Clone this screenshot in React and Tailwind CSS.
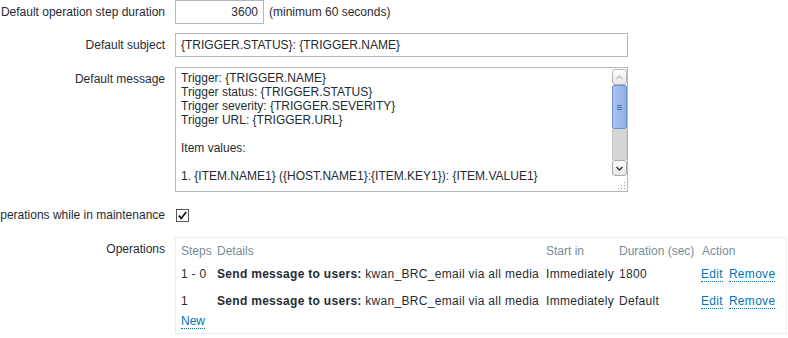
import React from 'react'

const lines = [
  'Trigger: {TRIGGER.NAME}',
  'Trigger status: {TRIGGER.STATUS}',
  'Trigger severity: {TRIGGER.SEVERITY}',
  'Trigger URL: {TRIGGER.URL}',
  '',
  'Item values:',
  '',
  '1. {ITEM.NAME1} ({HOST.NAME1}:{ITEM.KEY1}): {ITEM.VALUE1}',
]

const ops = [
  { steps: '1 - 0', dur: '1800' },
  { steps: '1', dur: 'Default' },
]

function Label({ children, top }) {
  return (
    <div className={`w-[165px] shrink-0 flex justify-end whitespace-nowrap leading-[14px] ${top || ''}`}>
      <span>{children}</span>
    </div>
  )
}

function LinkBtn({ children }) {
  return (
    <span className="inline-block leading-[14px] text-[#0275b8] border-b border-dotted border-[#0275b8]">{children}</span>
  )
}

function Scrollbar() {
  return (
    <div className="w-[15px] shrink-0 mt-[1px] flex flex-col">
      {/* up arrow */}
      <div className="h-[16px] rounded-[3px] border border-[#b4b4b4] bg-gradient-to-b from-[#fdfdfd] to-[#e6e6e6] flex items-center justify-center">
        <svg width="7" height="5" viewBox="0 0 7 5">
          <polyline points="0.5,4 3.5,1 6.5,4" fill="none" stroke="#b9b9b9" strokeWidth="1.2" />
        </svg>
      </div>
      {/* thumb */}
      <div className="h-[44px] rounded-[2px] border border-[#6f94cc] bg-gradient-to-r from-[#a9c5ef] to-[#8fb0e3] flex items-center justify-center">
        <svg width="5" height="7" viewBox="0 0 5 7">
          <path d="M0 1.5h5M0 3.5h5M0 5.5h5" stroke="#4f6f9f" strokeWidth="1" />
        </svg>
      </div>
      {/* track */}
      <div className="h-[31px] bg-[#d6d6d6] border-x border-[#c4c4c4]" />
      {/* down arrow */}
      <div className="h-[16px] rounded-[3px] border border-[#a8a8a8] bg-gradient-to-b from-[#fdfdfd] to-[#e6e6e6] flex items-center justify-center">
        <svg width="7" height="5" viewBox="0 0 7 5">
          <polyline points="0.5,1 3.5,4 6.5,1" fill="none" stroke="#333" strokeWidth="1.4" />
        </svg>
      </div>
      {/* resize grip */}
      <div className="flex-1 flex items-end justify-end pr-[1px] pb-[1px]">
        <svg width="8" height="8" viewBox="0 0 8 8">
          <g fill="#9a9a9a">
            <rect x="6" y="0" width="1" height="1" />
            <rect x="3" y="3" width="1" height="1" />
            <rect x="6" y="3" width="1" height="1" />
            <rect x="0" y="6" width="1" height="1" />
            <rect x="3" y="6" width="1" height="1" />
            <rect x="6" y="6" width="1" height="1" />
          </g>
        </svg>
      </div>
    </div>
  )
}

export default function App() {
  return (
    <div className="w-[788px] h-[338px] overflow-hidden bg-white font-['Liberation_Sans',Arial,sans-serif] text-[12px] text-[#1f2c33]">
      {/* step duration */}
      <div className="flex items-center h-[24px]">
        <Label>Default operation step duration</Label>
        <div className="ml-[10px] w-[89px] h-[24px] border border-[#acbbc2] text-right pr-[5px] leading-[22px]">3600</div>
        <span className="ml-[5px] whitespace-nowrap">(minimum 60 seconds)</span>
      </div>

      {/* subject */}
      <div className="flex items-center h-[24px] mt-[9px]">
        <Label>Default subject</Label>
        <div className="ml-[10px] w-[453px] h-[24px] border border-[#acbbc2] px-[5px] leading-[22px] whitespace-nowrap">
          {'{TRIGGER.STATUS}: {TRIGGER.NAME}'}
        </div>
      </div>

      {/* message */}
      <div className="flex items-start mt-[10px]">
        <Label top="pt-[5px]">Default message</Label>
        <div className="ml-[10px] w-[453px] h-[125px] border border-[#acbbc2] flex">
          <div className="flex-1 overflow-hidden pl-[5px] pt-[3px] leading-[14px] whitespace-nowrap">
            {lines.map((l, i) => (
              <div key={i} className="h-[14px]">{l}</div>
            ))}
          </div>
          <Scrollbar />
        </div>
      </div>

      {/* maintenance */}
      <div className="flex items-center h-[26px] mt-[10px]">
        <Label>Pause operations while in maintenance</Label>
        <div className="ml-[11px] w-[13px] h-[13px]">
          <svg width="13" height="13" viewBox="0 0 13 13">
            <rect x="0.5" y="0.5" width="12" height="12" fill="#fff" stroke="#555" />
            <polyline points="2.8,6.6 5.2,9.4 10.2,3" fill="none" stroke="#111" strokeWidth="1.7" />
          </svg>
        </div>
      </div>

      {/* operations */}
      <div className="flex items-start mt-[9px]">
        <Label top="pt-[5px]">Operations</Label>
        <div className="ml-[10px] w-[612px] border border-[#ebeef0] pl-[5px] pt-[1px] pb-[3px] whitespace-nowrap">
          <div className="grid grid-cols-[36px_329px_73px_83px_1fr] h-[24px] items-center text-[#768d99]">
            <div>Steps</div>
            <div>Details</div>
            <div>Start in</div>
            <div>Duration (sec)</div>
            <div>Action</div>
          </div>
          {ops.map((o, i) => (
            <div key={i} className={`grid grid-cols-[36px_329px_73px_83px_1fr] h-[22px] items-center tracking-[0.3px] ${i > 0 ? 'mt-[5px]' : ''}`}>
              <div>{o.steps}</div>
              <div><b>Send message to users:</b> kwan_BRC_email via all media</div>
              <div>Immediately</div>
              <div>{o.dur}</div>
              <div className="flex gap-[6px] -ml-[1px]">
                <LinkBtn>Edit</LinkBtn>
                <LinkBtn>Remove</LinkBtn>
              </div>
            </div>
          ))}
          <div className="h-[18px] flex items-center">
            <LinkBtn>New</LinkBtn>
          </div>
        </div>
      </div>
    </div>
  )
}
